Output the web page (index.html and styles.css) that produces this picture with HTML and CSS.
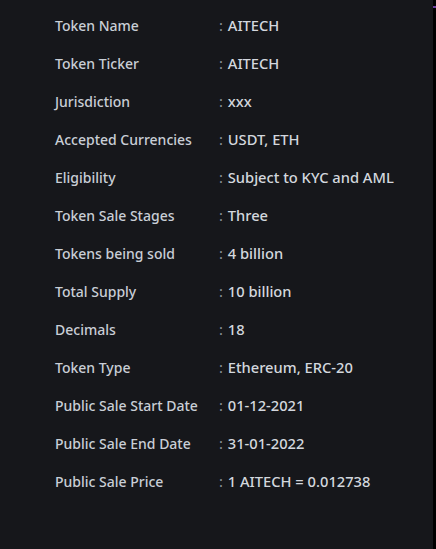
FILE: index.html
```html
<!DOCTYPE html>
<html>
<head>
    <title>Token Details</title>
    <link rel="stylesheet" href="styles.css">
</head>
<body>
    <div class="page">
        <div class="details">
            <div class="row"><span class="label">Token Name</span><span class="value"><i>:</i> AITECH</span></div>
            <div class="row"><span class="label">Token Ticker</span><span class="value"><i>:</i> AITECH</span></div>
            <div class="row"><span class="label">Jurisdiction</span><span class="value"><i>:</i> xxx</span></div>
            <div class="row"><span class="label">Accepted Currencies</span><span class="value"><i>:</i> USDT, ETH</span></div>
            <div class="row"><span class="label">Eligibility</span><span class="value"><i>:</i> Subject to KYC and AML</span></div>
            <div class="row"><span class="label">Token Sale Stages</span><span class="value"><i>:</i> Three</span></div>
            <div class="row"><span class="label">Tokens being sold</span><span class="value"><i>:</i> 4 billion</span></div>
            <div class="row"><span class="label">Total Supply</span><span class="value"><i>:</i> 10 billion</span></div>
            <div class="row"><span class="label">Decimals</span><span class="value"><i>:</i> 18</span></div>
            <div class="row"><span class="label">Token Type</span><span class="value"><i>:</i> Ethereum, ERC-20</span></div>
            <div class="row"><span class="label">Public Sale Start Date</span><span class="value"><i>:</i> 01-12-2021</span></div>
            <div class="row"><span class="label">Public Sale End Date</span><span class="value"><i>:</i> 31-01-2022</span></div>
            <div class="row"><span class="label">Public Sale Price</span><span class="value"><i>:</i> 1 AITECH = 0.012738</span></div>
        </div>
        <div class="edge">
            <div class="edge-mark"></div>
        </div>
    </div>
</body>
</html>
```
FILE: styles.css
```css
html, body {
    margin: 0;
    height: 100%;
}
body {
    background-color: #16171b;
    font-family: "Noto Sans", "Open Sans", sans-serif;
    color: #c9ced6;
}
.page {
    display: flex;
    height: 100%;
}
.details {
    flex: 1;
    padding: 7px 0 0 55px;
}
.row {
    display: grid;
    grid-template-columns: 164px 1fr;
    align-items: baseline;
    height: 38px;
    line-height: 36px;
    font-size: 14px;
    font-weight: 500;
}
.value {
    font-size: 14.7px;
    color: #d3d7de;
}
.value i {
    font-style: normal;
    font-weight: 400;
    color: #8e939b;
    margin-right: 1px;
}
.edge {
    width: 3px;
    background-color: #000;
    padding-top: 6px;
}
.edge-mark {
    height: 2px;
    background-color: #6b3fa0;
}
```
